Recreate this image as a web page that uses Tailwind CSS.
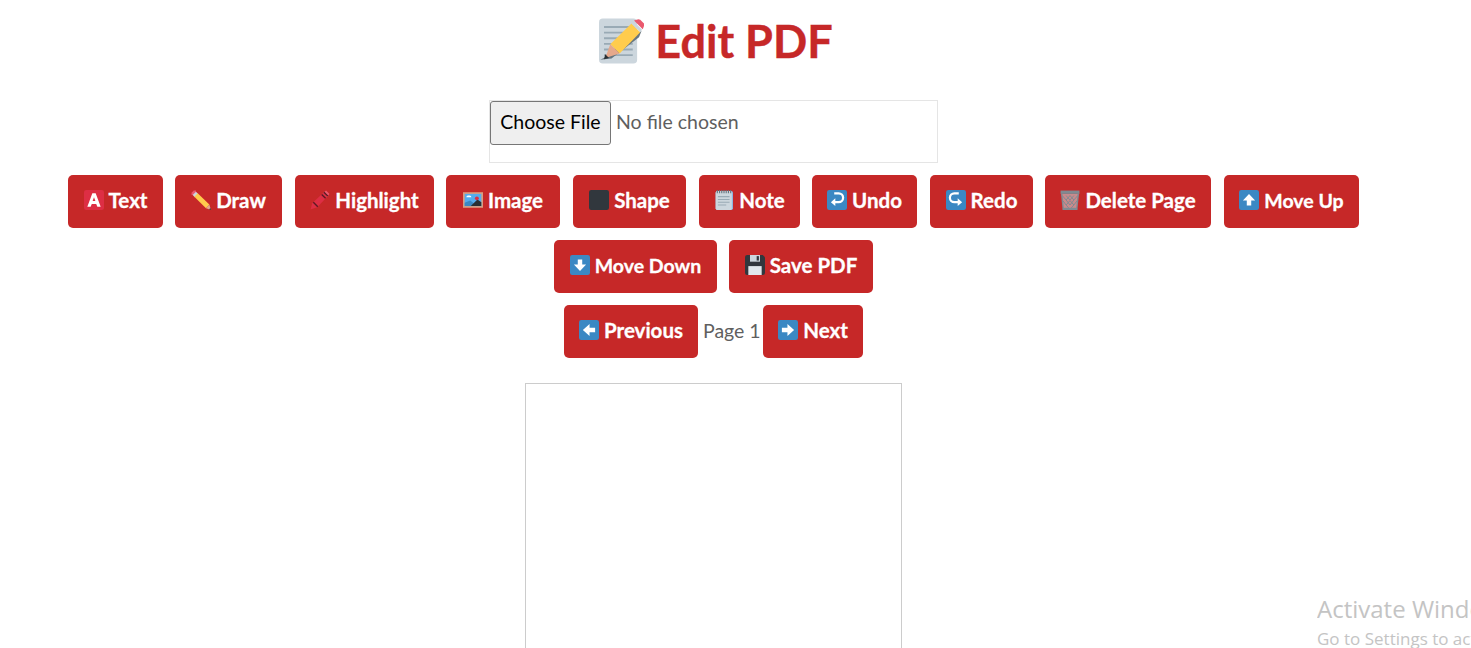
<!DOCTYPE html>
<html><head><meta charset="utf-8"><script src="https://cdn.jsdelivr.net/npm/@tailwindcss/browser@4"></script></head>
<body class="bg-white overflow-hidden">
<main class="w-[1427px] h-[648px] overflow-hidden flex flex-col items-center font-['Lato','Liberation_Sans',sans-serif]">
<h1 class="h-[100px] pt-[14px] flex items-start gap-[11px] ml-[5px] text-[#c62828] text-[45px] leading-[54px] font-bold [-webkit-text-stroke:0.4px_#c62828] shrink-0">
<svg class="w-[45px] h-[46px] mt-[4px]" viewBox="0 0 36 36"><rect y="0" width="30.500" height="36" rx="3" fill="#ccd6dd"/><path d="M4 6h23v1.500H4zM4 10.500h23V12H4zM4 15h23v1.500H4zM4 19.500h23V21H4zM4 24h23v1.500H4zM4 28.500h23V30H4z" fill="#99aab5"/><path d="M5 31l19-17 10-4-2 5-22 17-9 1z" fill="#66757f"/><path d="M9 20.500L26 4l7 7-16.500 17z" fill="#ffcc4d"/><path d="M9 20.500l7.500 7.500L5 31.500z" fill="#e6a88b"/><path d="M4 32.500l1-4 3 3z" fill="#292f33"/><path d="M26 4l7 7 1.500-2-7-7z" fill="#ccd6dd"/><path d="M28 1.500l7 7 1-2.500a3 3 0 000-2l-3-3a3 3 0 00-3 0z" fill="#ea596e"/></svg>
<span>Edit PDF</span></h1>
<div class="w-[449px] h-[63px] border border-[#e5e5e5] flex items-start shrink-0">
<span class="h-[44px] w-[121px] rounded-[3px] border border-[#767676] bg-[#efefef] text-black text-[19.500px] pb-[2px] flex items-center justify-center">Choose File</span>
<span class="ml-[5px] mt-[8px] text-[19.500px] leading-[26px] text-[#5f5f5f]">No file chosen</span>
</div>
<div class="mt-[12px] flex gap-x-3 h-[53px] text-white text-[20.500px] font-bold [-webkit-text-stroke:0.3px_#fff] shrink-0">
<button class="w-[95px] h-[53px] pb-[2px] rounded-[5px] bg-[#c62828] flex items-center justify-center gap-[5px]"><svg class="w-5 h-5 mb-px" viewBox="0 0 36 36"><rect width="36" height="36" rx="4" fill="#dd2e44"/><path d="M15 6h6l9 24h-6l-2-5h-8l-2 5H6zm3 7l-2.500 7h5z" fill="#fff" fill-rule="evenodd" stroke="none"/></svg>Text</button>
<button class="w-[107px] h-[53px] pb-[2px] rounded-[5px] bg-[#c62828] flex items-center justify-center gap-[5px]"><svg class="w-5 h-5 mb-px" viewBox="0 0 36 36"><path d="M1 5l4-4 4 0 0 4-4 4-4 0z" fill="#ea596e"/><path d="M3 9l6-6 4 4-6 6z" fill="#ccd6dd"/><path d="M6 12l6-6 21 20-6 7z" fill="#ffcc4d"/><path d="M27 33l6-7 3 10z" fill="#e6a88b"/><path d="M32.500 35l2.500-2.500 1 3.500z" fill="#292f33"/></svg>Draw</button>
<button class="ml-px w-[139px] h-[53px] pb-[2px] rounded-[5px] bg-[#c62828] flex items-center justify-center gap-[5px]"><svg class="w-5 h-5 mb-px" viewBox="0 0 36 36"><path d="M1 35l3-11L24 5l7 7-18 19z" fill="#dd2e44"/><path d="M24 5l5-4 6 6-4 5z" fill="#ea596e"/><path d="M6 22l8 8M21 8l7 7M25 4l7 7" stroke="#5c1a22" stroke-width="2.500"/></svg>Highlight</button>
<button class="w-[114px] h-[53px] pb-[2px] rounded-[5px] bg-[#c62828] flex items-center justify-center gap-[5px]"><svg class="w-5 h-5 mb-px" viewBox="0 0 36 36"><rect y="4" width="36" height="28" fill="#d99e82"/><rect x="3" y="7" width="30" height="22" fill="#55acee"/><path d="M3 29v-6l10-4 13 10z" fill="#3b88c3"/><path d="M14 29l12-12 7 5v7z" fill="#292f33"/><circle cx="25" cy="15" r="3.500" fill="#dd2e44"/><path d="M6 13a3 3 0 013-3h3a3 3 0 013 3z" fill="#fff"/></svg>Image</button>
<button class="ml-px w-[113px] h-[53px] pb-[2px] rounded-[5px] bg-[#c62828] flex items-center justify-center gap-[5px]"><svg class="w-5 h-5 mb-px" viewBox="0 0 36 36"><rect width="36" height="36" rx="4" fill="#31373d"/></svg>Shape</button>
<button class="ml-px w-[101px] h-[53px] pb-[2px] rounded-[5px] bg-[#c62828] flex items-center justify-center gap-[5px]"><svg class="w-5 h-5 mb-px" viewBox="0 0 36 36"><rect x="3" y="2" width="31" height="34" rx="3" fill="#88c9f9"/><rect x="3" y="2" width="29" height="34" rx="3" fill="#ccd6dd"/><path d="M7 11h21v2H7zM7 16h21v2H7zM7 21h21v2H7zM7 26h15v2H7z" fill="#99aab5"/><path d="M6 0v6M10 0v6M14 0v6M18 0v6M22 0v6M26 0v6M30 0v6" stroke="#66757f" stroke-width="2"/></svg>Note</button>
<button class="w-[105px] h-[53px] pb-[2px] rounded-[5px] bg-[#c62828] flex items-center justify-center gap-[5px]"><svg class="w-5 h-5 mb-px" viewBox="0 0 36 36"><rect width="36" height="36" rx="4" fill="#3b88c3"/><path d="M13 6h8a8 8 0 010 16h-8" fill="none" stroke="#fff" stroke-width="4"/><path d="M15 15v14l-8-7z" fill="#fff"/></svg>Undo</button>
<button class="ml-px w-[103px] h-[53px] pb-[2px] rounded-[5px] bg-[#c62828] flex items-center justify-center gap-[5px]"><svg class="w-5 h-5 mb-px" viewBox="0 0 36 36"><rect width="36" height="36" rx="4" fill="#3b88c3"/><path d="M23 6h-8a8 8 0 000 16h8" fill="none" stroke="#fff" stroke-width="4"/><path d="M21 15v14l8-7z" fill="#fff"/></svg>Redo</button>
<button class="w-[166px] h-[53px] pb-[2px] rounded-[5px] bg-[#c62828] flex items-center justify-center gap-[5px]"><svg class="w-5 h-5 mb-px" viewBox="0 0 36 36"><path d="M3 7h30l-3 29H6z" fill="#c98a8c"/><path d="M4 10l7 8 7-8 7 8 7-8M5 19l6 8 7-8 7 8 6-8M11 10l7 8 7-8M11 27l7 8 7-8M11 18l7 9 7-9" stroke="#808a92" stroke-width="1.800" fill="none"/><path d="M3 7L6 36M33 7L30 36" stroke="#808a92" stroke-width="2.500"/><rect x="1" y="1" width="34" height="6" fill="#808a92"/><rect x="5" y="32" width="26" height="4" fill="#808a92"/></svg>Delete Page</button>
<button class="ml-px w-[135px] h-[53px] pb-[2px] rounded-[5px] bg-[#c62828] text-[19.500px] flex items-center justify-center gap-[5px]"><svg class="w-5 h-5 mb-px" viewBox="0 0 36 36"><rect width="36" height="36" rx="4" fill="#3b88c3"/><path d="M18 7l11 12h-7v9h-8v-9H7z" fill="#fff"/></svg>Move Up</button>
</div>
<div class="mt-[12px] flex gap-x-[12px] h-[53px] text-white text-[20.500px] font-bold [-webkit-text-stroke:0.3px_#fff] shrink-0">
<button class="w-[163px] h-[53px] pb-[2px] rounded-[5px] bg-[#c62828] text-[19.500px] flex items-center justify-center gap-[5px]"><svg class="w-5 h-5 mb-px" viewBox="0 0 36 36"><rect width="36" height="36" rx="4" fill="#3b88c3"/><path d="M18 29L7 17h7V8h8v9h7z" fill="#fff"/></svg>Move Down</button>
<button class="w-[144px] h-[53px] pb-[2px] rounded-[5px] bg-[#c62828] flex items-center justify-center gap-[5px]"><svg class="w-5 h-5 mb-px" viewBox="0 0 36 36"><path d="M4 0h28l4 4v28a4 4 0 01-4 4H4a4 4 0 01-4-4V4a4 4 0 014-4z" fill="#31373d"/><rect x="6" y="20" width="24" height="16" fill="#e1e8ed"/><rect x="9" y="0" width="18" height="12" fill="#ccd6dd"/><rect x="21" y="2" width="4" height="8" fill="#31373d"/></svg>Save PDF</button>
</div>
<div class="mt-[12px] flex items-center gap-x-[4px] h-[53px] text-[20.500px] shrink-0">
<button class="w-[134px] h-[53px] pb-[2px] rounded-[5px] bg-[#c62828] text-white font-bold [-webkit-text-stroke:0.3px_#fff] flex items-center justify-center gap-[5px]"><svg class="w-5 h-5 mb-px" viewBox="0 0 36 36"><rect width="36" height="36" rx="4" fill="#3b88c3"/><path d="M7 18l12-11v7h10v8H19v7z" fill="#fff"/></svg>Previous</button>
<span class="w-[57px] pl-px pb-[2px] whitespace-nowrap text-center text-[19.500px] text-[#5f5f5f]">Page 1</span>
<button class="w-[100px] h-[53px] pb-[2px] rounded-[5px] bg-[#c62828] text-white font-bold [-webkit-text-stroke:0.3px_#fff] flex items-center justify-center gap-[5px]"><svg class="w-5 h-5 mb-px" viewBox="0 0 36 36"><rect width="36" height="36" rx="4" fill="#3b88c3"/><path d="M29 18L17 7v7H7v8h10v7z" fill="#fff"/></svg>Next</button>
</div>
<div class="mt-[25px] w-[377px] h-[300px] border border-[#ccc] shrink-0"></div>
</main>
<div class="absolute left-[1317px] top-[594px] w-[154px] h-[54px] overflow-hidden whitespace-nowrap text-[#c4c4c4] font-['Open_Sans',sans-serif]"><p class="text-[24px] leading-[30px]">Activate Windows</p><p class="text-[17px] leading-[29px]">Go to Settings to activate Windows.</p></div>
</body></html>
